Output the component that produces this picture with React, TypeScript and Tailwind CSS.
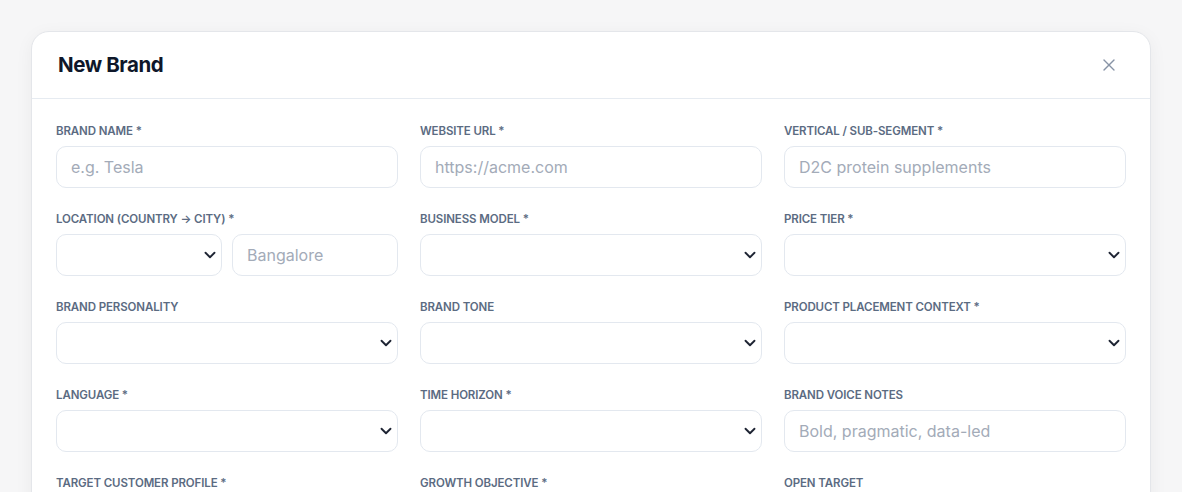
import { ChevronDown, X } from "lucide-react";

type Field =
  | { label: string; kind: "input"; placeholder?: string }
  | { label: string; kind: "select" }
  | { label: string; kind: "location" };

const FIELDS: Field[] = [
  { label: "Brand Name *", kind: "input", placeholder: "e.g. Tesla" },
  { label: "Website URL *", kind: "input", placeholder: "https://acme.com" },
  { label: "Vertical / Sub-Segment *", kind: "input", placeholder: "D2C protein supplements" },
  { label: "Location (Country → City) *", kind: "location" },
  { label: "Business Model *", kind: "select" },
  { label: "Price Tier *", kind: "select" },
  { label: "Brand Personality", kind: "select" },
  { label: "Brand Tone", kind: "select" },
  { label: "Product Placement Context *", kind: "select" },
  { label: "Language *", kind: "select" },
  { label: "Time Horizon *", kind: "select" },
  { label: "Brand Voice Notes", kind: "input", placeholder: "Bold, pragmatic, data-led" },
  { label: "Target Customer Profile *", kind: "select" },
  { label: "Growth Objective *", kind: "select" },
  { label: "Open Target", kind: "input", placeholder: "" },
];

function TextBox({ placeholder }: { placeholder?: string }) {
  return (
    <input
      placeholder={placeholder}
      className="h-[42px] w-full rounded-[10px] border border-[#e3e8ef] bg-white px-[14px] text-[16px] text-slate-900 outline-none placeholder:text-[#a3abb8]"
    />
  );
}

function SelectBox() {
  return (
    <div className="flex h-[42px] w-full items-center justify-end rounded-[10px] border border-[#e3e8ef] bg-white pr-[2px]">
      <ChevronDown size={18} strokeWidth={2.5} className="text-[#1e2433]" />
    </div>
  );
}

export default function App() {
  return (
    <div
      className="h-screen overflow-hidden bg-[#f6f6f7] px-[31px] pt-[31px]"
      style={{ fontFamily: "Inter, 'Noto Sans', sans-serif" }}
    >
      <div className="rounded-t-[18px] border border-[#e4e6ea] bg-white shadow-[0_4px_18px_rgba(15,23,42,0.05)]">
        <header className="flex h-[67px] items-center justify-between border-b border-[#e6ebf1] pl-[26px] pr-[31px]">
          <h1 className="text-[20.5px] font-bold tracking-[-0.02em] text-[#0f172a]">New Brand</h1>
          <X size={20} strokeWidth={1.6} className="text-[#8793a6]" />
        </header>

        <div className="grid grid-cols-3 gap-x-[22px] gap-y-[23px] px-6 pt-[24px] pb-8">
          {FIELDS.map((f) => (
            <div key={f.label} className="flex flex-col gap-[7px]">
              <label className="text-[11.5px] font-semibold uppercase leading-4 tracking-[-0.01em] text-[#5b6b82]">
                {f.label}
              </label>
              {f.kind === "input" && <TextBox placeholder={f.placeholder} />}
              {f.kind === "select" && <SelectBox />}
              {f.kind === "location" && (
                <div className="grid grid-cols-2 gap-[10px]">
                  <SelectBox />
                  <TextBox placeholder="Bangalore" />
                </div>
              )}
            </div>
          ))}
        </div>
      </div>
    </div>
  );
}
